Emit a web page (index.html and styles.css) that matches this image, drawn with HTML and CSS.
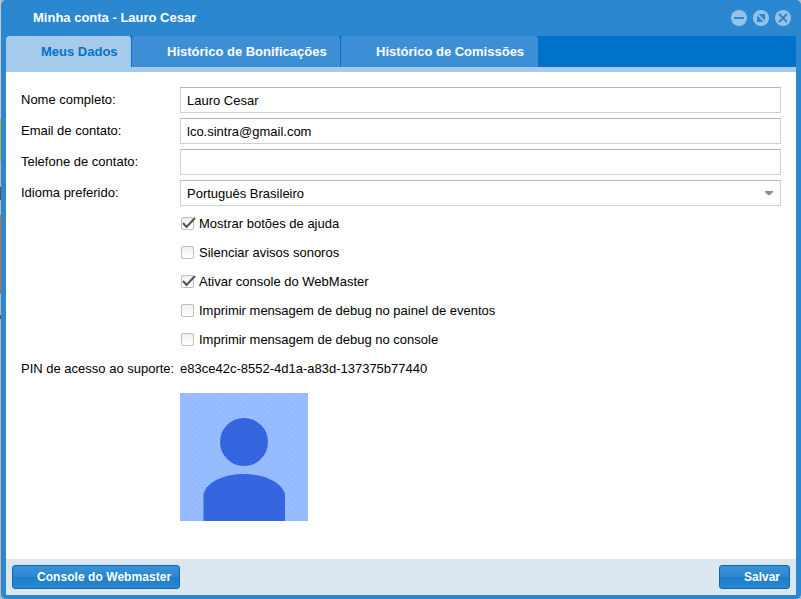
FILE: index.html
```
<!DOCTYPE html>
<html lang="pt-BR">
<head>
<meta charset="utf-8">
<title>Minha conta</title>
<link rel="stylesheet" href="styles.css">
</head>
<body>
<div class="window">
  <header class="titlebar">
    <h1>Minha conta - Lauro Cesar</h1>
    <div class="tools">
      <svg width="16" height="16" viewBox="0 0 16 16"><circle cx="8" cy="8" r="8"/><path d="M3 8h10"/></svg>
      <svg width="16" height="16" viewBox="0 0 16 16"><circle cx="8" cy="8" r="8"/><path class="solid" d="M4 4h8v8H4z"/><path class="band" d="M4 4l8 8"/></svg>
      <svg width="16" height="16" viewBox="0 0 16 16"><circle cx="8" cy="8" r="8"/><path d="M4 4l8 8M12 4l-8 8"/></svg>
    </div>
  </header>
  <nav class="tabs">
    <div class="tab active">Meus Dados</div>
    <div class="tab second">Histórico de Bonificações</div>
    <div class="tab third">Histórico de Comissões</div>
  </nav>
  <main class="form">
    <div class="row"><span class="label">Nome completo:</span><div class="input">Lauro Cesar</div></div>
    <div class="row"><span class="label">Email de contato:</span><div class="input">lco.sintra@gmail.com</div></div>
    <div class="row"><span class="label">Telefone de contato:</span><div class="input"></div></div>
    <div class="row"><span class="label">Idioma preferido:</span><div class="input">Português Brasileiro<svg class="arrow" width="8" height="4" viewBox="0 0 8 4"><path d="M0 0h8v1L5 4H3L0 1z"/></svg></div></div>
    <div class="checks">
      <div class="check"><i class="box"><svg width="15" height="14" viewBox="0 0 15 14"><path d="M2 7l3.500 4L14 2"/></svg></i>Mostrar botões de ajuda</div>
      <div class="check"><i class="box"></i>Silenciar avisos sonoros</div>
      <div class="check"><i class="box"><svg width="15" height="14" viewBox="0 0 15 14"><path d="M2 7l3.500 4L14 2"/></svg></i>Ativar console do WebMaster</div>
      <div class="check"><i class="box"></i>Imprimir mensagem de debug no painel de eventos</div>
      <div class="check"><i class="box"></i>Imprimir mensagem de debug no console</div>
    </div>
    <div class="row pin"><span class="label">PIN de acesso ao suporte:</span><span>e83ce42c-8552-4d1a-a83d-137375b77440</span></div>
    <svg class="avatar" width="128" height="128" viewBox="0 0 128 128">
      <defs>
        <pattern id="grain" width="6" height="6" patternUnits="userSpaceOnUse"><path d="M1 1h1v1h-1zM4 4h1v1h-1z" fill="#5585ee" fill-opacity=".45"/></pattern>
        <pattern id="weave" width="6" height="6" patternUnits="userSpaceOnUse"><path d="M0 1h2v1H0zM3 4h2v1H3z" fill="#7fa9f8" fill-opacity=".4"/></pattern>
      </defs>
      <path d="M0 0h128v128H0z" fill="#97bcff"/><path d="M0 0h128v128H0z" fill="url(#weave)"/>
      <g fill="#3464de"><circle cx="64" cy="49" r="24"/><path id="b" d="M23.500 128V101C27 88 45 81 64 81s37 7 41 20v27z"/></g>
      <g fill="url(#grain)"><circle cx="64" cy="49" r="24"/><use href="#b"/></g>
    </svg>
  </main>
  <footer class="toolbar">
    <div class="button console">Console do Webmaster</div>
    <div class="button save">Salvar</div>
  </footer>
</div>
</body>
</html>
```
FILE: styles.css
```
* { box-sizing: border-box; }
body {
  margin: 0;
  height: 599px;
  padding-left: 1px;
  overflow: hidden;
  font: 13px/16px "Liberation Sans", Arial, sans-serif;
  color: #000;
  background: linear-gradient(#c8c8c8 119px, #a3bd32 119px 161px, #bcb8b5 161px 187px, #555 187px 200px, #bcb8b5 200px 215px, #c56d34 215px 294px, #bcb8b5 294px 315px, #555 315px 319px, #bcb8b5 319px) 0 0 / 1px 100% no-repeat #bbb;
}
.window {
  display: flex;
  flex-direction: column;
  height: 599px;
  padding: 0 5px 4px;
  border-radius: 5px;
  background: #2a87d0;
}
.titlebar {
  display: flex;
  justify-content: space-between;
  height: 36px;
  padding: 10px 5px 0 27px;
}
h1 { margin: 0; font-size: 13px; line-height: 16px; color: #fff; white-space: nowrap; }
.tools { display: flex; gap: 6px; }
.tools circle { fill: #94c3e7; }
.tools path { fill: none; stroke: #2a87d0; stroke-width: 2; }
.tools .solid { fill: #2a87d0; stroke: none; }
.tools .band { stroke: #94c3e7; stroke-width: 1.8; }
.tabs {
  display: flex;
  gap: 1px;
  height: 36px;
  background: #0072c9;
  border-bottom: 5px solid #a5cbec;
}
.tab {
  height: 31px;
  padding: 8px 0 0 35px;
  border-radius: 3px 3px 0 0;
  background: #3d8fd5;
  color: #fff;
  font-weight: bold;
  white-space: nowrap;
}
.active { width: 125px; color: #0072c9; background: #a5cbec; }
.second { width: 208px; }
.third { width: 197px; }
.form { flex: 1; padding: 15px; background: #fff; }
.row { display: flex; height: 26px; margin-bottom: 5px; }
.label { width: 159px; flex: none; padding-top: 5px; white-space: nowrap; }
.input {
  display: flex;
  justify-content: space-between;
  flex: 1;
  padding: 5px 7px 0 6px;
  border: 1px solid #d0d0d0;
  border-top-color: #b5b5b5;
}
.arrow { margin-top: 5px; fill: #8d8d8d; }
.checks { padding: 5px 0 0 160px; }
.check { display: flex; align-items: flex-start; gap: 5px; height: 16px; margin-bottom: 13px; }
.box {
  width: 13px;
  height: 13px;
  margin-top: 1px;
  border: 1px solid #bebebe;
  border-radius: 2px;
  background: linear-gradient(#f0f0f0, #fff);
  overflow: visible;
}
.box svg { display: block; margin: -2px 0 0 -1px; }
.box path { fill: none; stroke: #555; stroke-width: 2; }
.pin { height: 16px; margin: 0 0 16px; }
.pin .label { padding: 0; }
.avatar { display: block; margin-left: 159px; }
.toolbar {
  display: flex;
  justify-content: space-between;
  height: 36px;
  padding: 6px;
  background: #dae6f0;
}
.button {
  height: 24px;
  padding: 3px 0 0 24px;
  border: 1px solid #1265a8;
  border-radius: 3px;
  background: linear-gradient(#3992d8, #2b87d0 50%, #1e7bc5 51%, #2b88d2);
  color: #fff;
  font-size: 12px;
  font-weight: bold;
  white-space: nowrap;
}
.console { width: 168px; letter-spacing: .05px; }
.save { width: 71px; }
```
